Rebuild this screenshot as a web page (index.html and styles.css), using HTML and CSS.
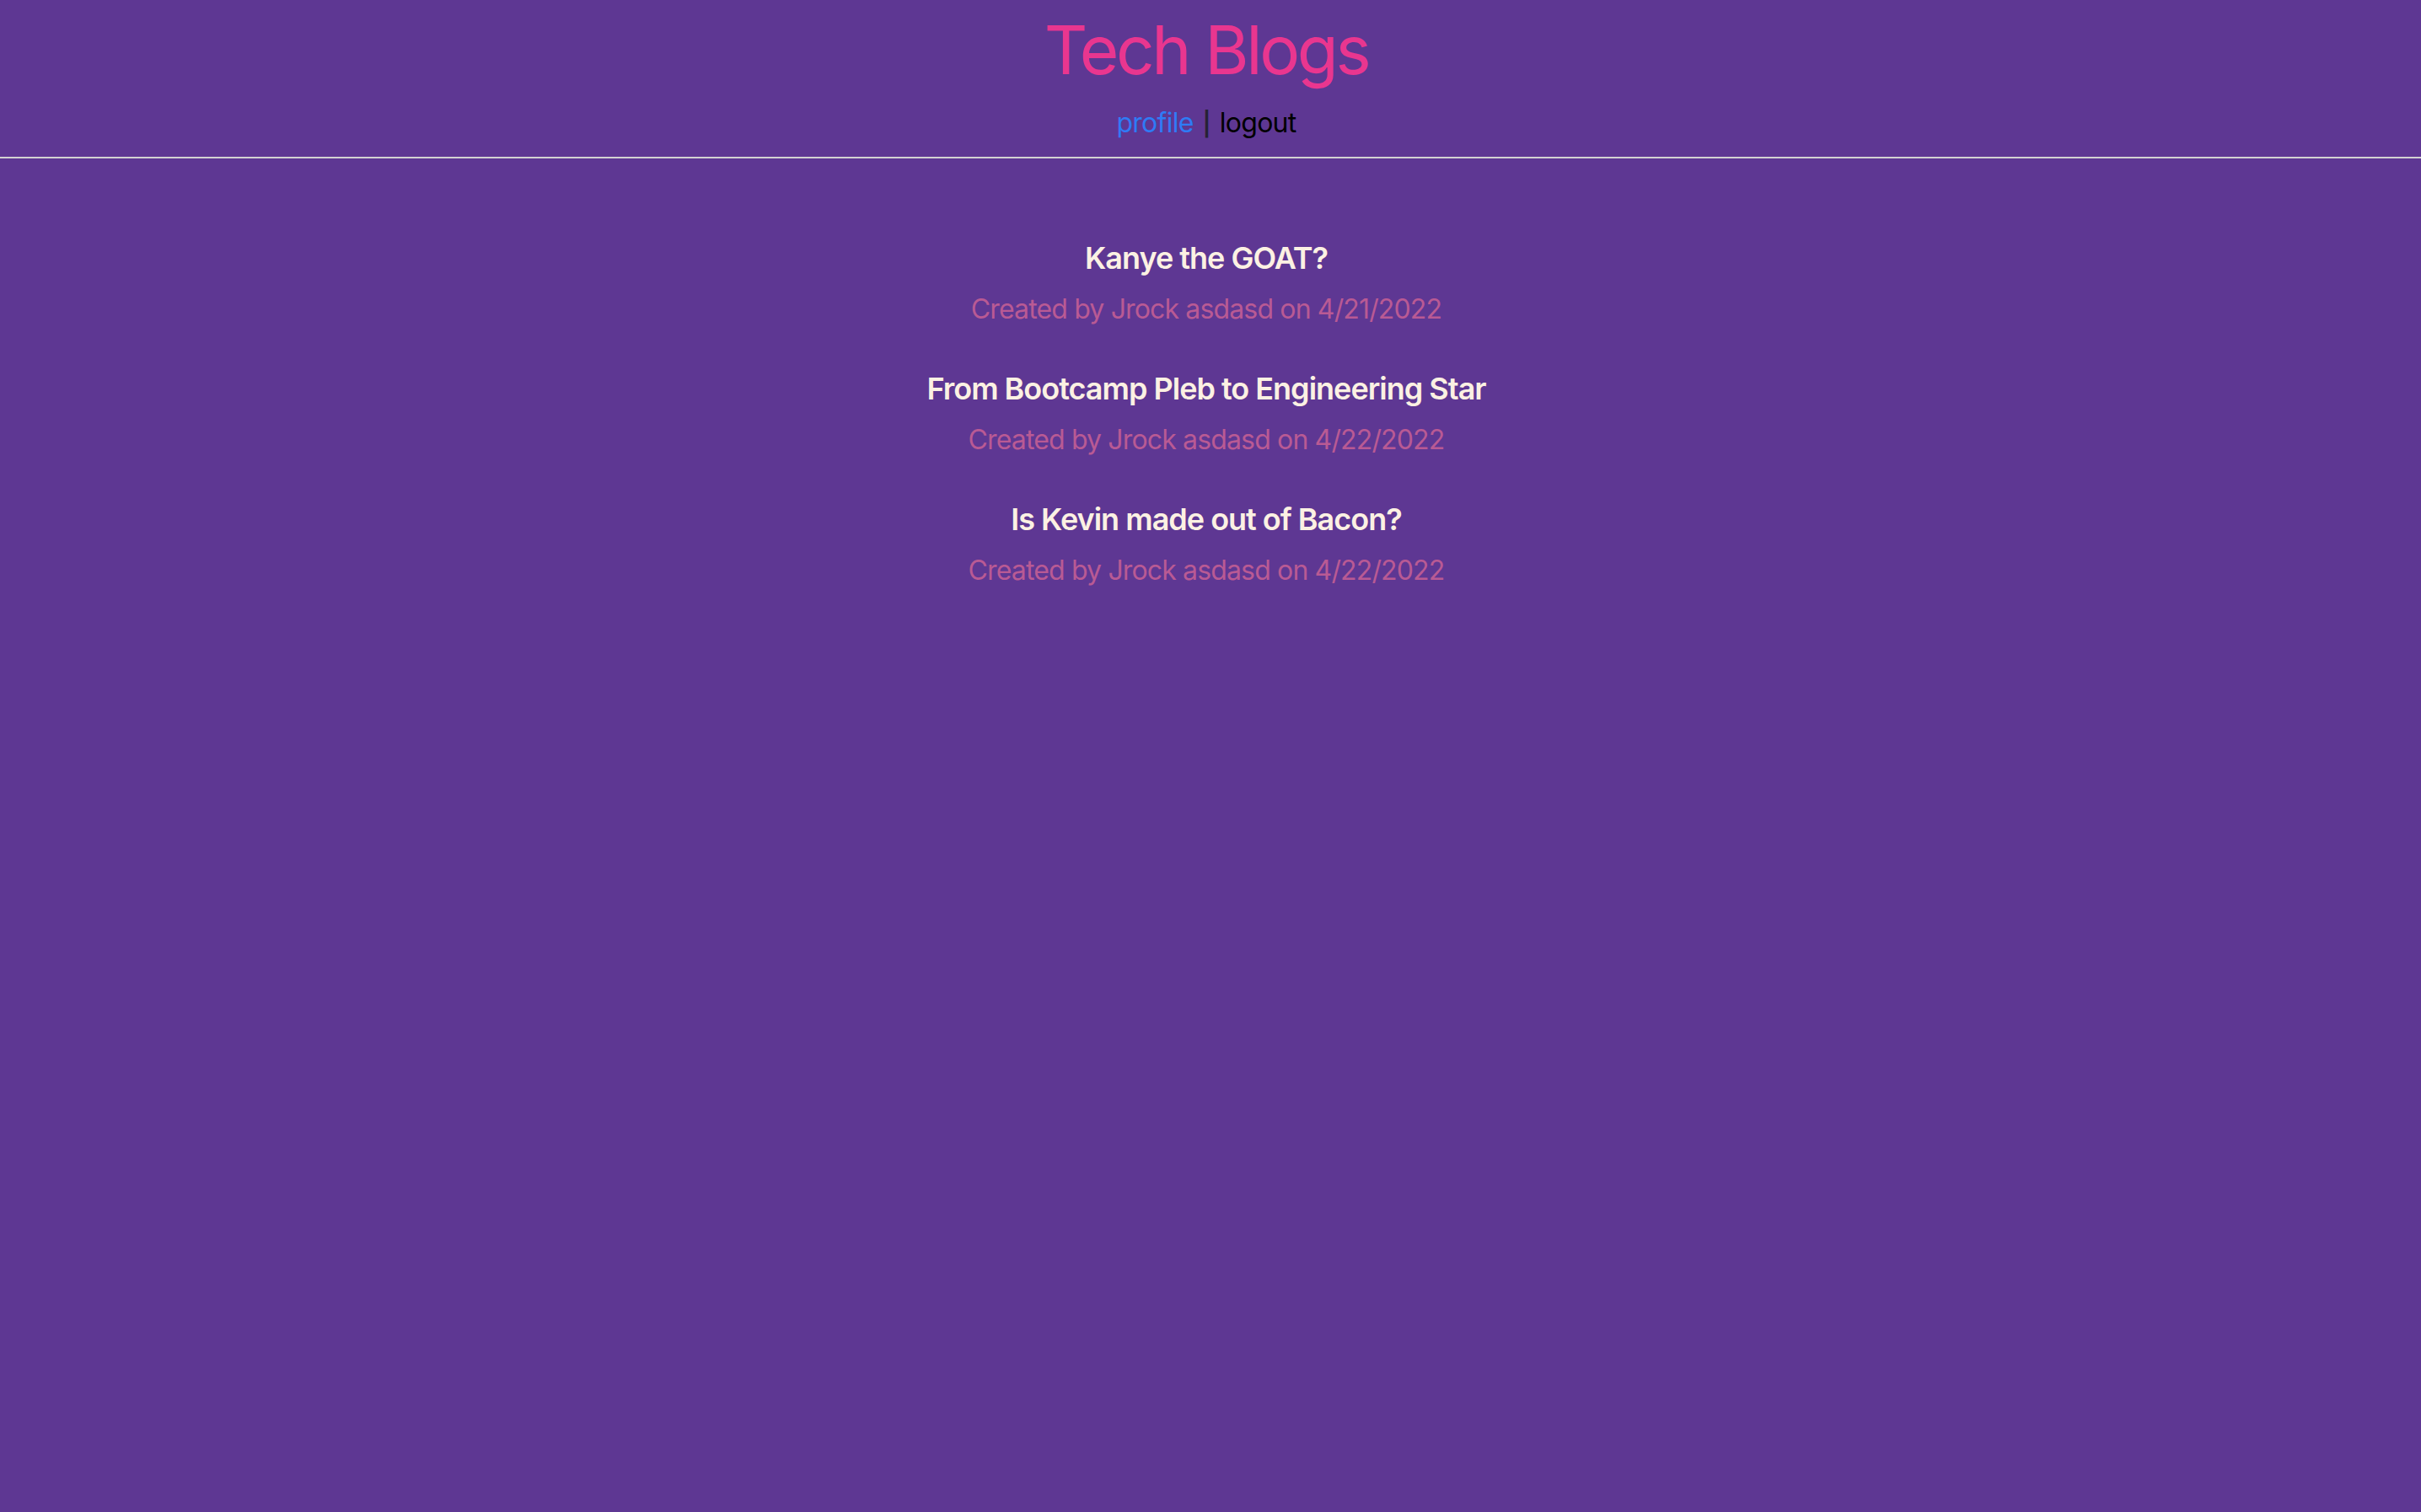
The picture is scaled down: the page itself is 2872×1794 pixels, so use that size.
FILE: index.html
```html
<!DOCTYPE html>
<html lang="en">
<head>
<meta charset="utf-8">
<title>Tech Blogs</title>
<link rel="stylesheet" href="styles.css">
</head>
<body>
<header class="site-header">
  <h1 class="site-title">Tech Blogs</h1>
  <nav class="site-nav"><a class="nav-profile" href="#">profile</a><span class="nav-sep">|</span><a class="nav-logout" href="#">logout</a></nav>
</header>
<main class="posts">
  <article class="post">
    <h2 class="post-title">Kanye the GOAT?</h2>
    <p class="post-meta">Created by Jrock asdasd on 4/21/2022</p>
  </article>
  <article class="post">
    <h2 class="post-title">From Bootcamp Pleb to Engineering Star</h2>
    <p class="post-meta">Created by Jrock asdasd on 4/22/2022</p>
  </article>
  <article class="post">
    <h2 class="post-title">Is Kevin made out of Bacon?</h2>
    <p class="post-meta">Created by Jrock asdasd on 4/22/2022</p>
  </article>
</main>
</body>
</html>
```
FILE: styles.css
```css
html, body {
  margin: 0;
  padding: 0;
}
body {
  background: #5e3793;
  font-family: Inter, "Noto Sans", sans-serif;
  min-height: 100vh;
}
.site-header {
  display: flex;
  flex-direction: column;
  align-items: center;
  padding-top: 19px;
  padding-bottom: 15px;
  padding-right: 10px;
  border-bottom: 2px solid #d2d2d2;
}
.site-title {
  margin: 0;
  font-size: 80px;
  line-height: 80px;
  font-weight: 400;
  letter-spacing: -3.4px;
  color: #e9368f;
}
.site-nav {
  display: flex;
  align-items: baseline;
  margin-top: 23px;
  font-size: 32px;
  line-height: 48px;
  letter-spacing: -0.75px;
  color: #222;
}
.site-nav a {
  text-decoration: none;
}
.nav-profile {
  color: #2f7bf5;
}
.nav-sep {
  margin: 0 11px;
  font-size: 28px;
  font-weight: 600;
  color: #262234;
}
.nav-logout {
  color: #000;
}
.posts {
  display: flex;
  flex-direction: column;
  align-items: center;
  gap: 43px;
  padding-top: 91px;
  padding-right: 10px;
}
.post {
  display: flex;
  flex-direction: column;
  align-items: center;
  gap: 10px;
}
.post-title {
  margin: 0;
  font-size: 36px;
  line-height: 54px;
  font-weight: 600;
  letter-spacing: -1px;
  color: #fcf1e3;
}
.post-meta {
  margin: 0;
  font-size: 32px;
  line-height: 48px;
  letter-spacing: -0.85px;
  color: #b95a94;
}
```
